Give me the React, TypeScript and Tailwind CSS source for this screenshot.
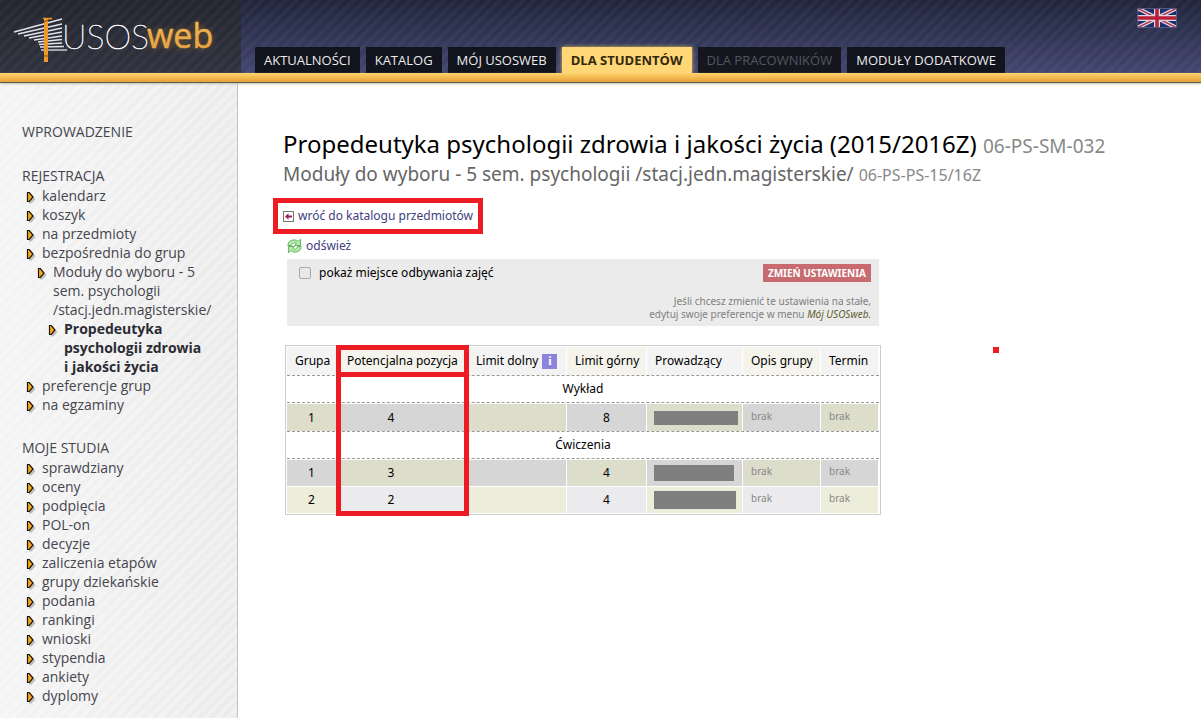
import { ReactNode } from "react"

interface NavTab {
  label: string
  state?: "active" | "disabled"
}

interface MenuItem {
  label: string
  level?: number
  current?: boolean
}

interface GroupRow {
  group: number
  position: number
  limit: number
  maskClass: string
}

const tabs: NavTab[] = [
  { label: "AKTUALNOŚCI" },
  { label: "KATALOG" },
  { label: "MÓJ USOSWEB" },
  { label: "DLA STUDENTÓW", state: "active" },
  { label: "DLA PRACOWNIKÓW", state: "disabled" },
  { label: "MODUŁY DODATKOWE" },
]

const registration: MenuItem[] = [
  { label: "kalendarz" },
  { label: "koszyk" },
  { label: "na przedmioty" },
  { label: "bezpośrednia do grup" },
  { label: "Moduły do wyboru - 5 sem. psychologii /stacj.jedn.magisterskie/", level: 1 },
  { label: "Propedeutyka psychologii zdrowia i\u00a0jakości życia", level: 2, current: true },
  { label: "preferencje grup" },
  { label: "na egzaminy" },
]

const studies: MenuItem[] = [
  { label: "sprawdziany" },
  { label: "oceny" },
  { label: "podpięcia" },
  { label: "POL-on" },
  { label: "decyzje" },
  { label: "zaliczenia etapów" },
  { label: "grupy dziekańskie" },
  { label: "podania" },
  { label: "rankingi" },
  { label: "wnioski" },
  { label: "stypendia" },
  { label: "ankiety" },
  { label: "dyplomy" },
]

const lectures: GroupRow[] = [{ group: 1, position: 4, limit: 8, maskClass: "w-[84px] h-[14px]" }]
const classes: GroupRow[] = [
  { group: 1, position: 3, limit: 4, maskClass: "w-[80px] h-[16px]" },
  { group: 2, position: 2, limit: 4, maskClass: "w-[82px] h-[18px]" },
]

const levelClass = ["pl-1", "pl-[15px]", "pl-[26px]"]

function Logo() {
  return (
    <svg width="240" height="72" viewBox="0 0 240 72" role="img" aria-label="USOSweb">
      <defs>
        <linearGradient id="web" x1="0" y1="0" x2="0" y2="1">
          <stop offset="0" stopColor="#f6c363" />
          <stop offset="1" stopColor="#e09a35" />
        </linearGradient>
        <filter id="glow" x="-20%" y="-20%" width="140%" height="140%">
          <feGaussianBlur stdDeviation="3" />
        </filter>
      </defs>
      <g stroke="#e4e4e8" strokeWidth="1.3" fill="none">
        <path d="M14 32 62 19" />
        <path d="M18 34 62 24" />
        <path d="M24 36 62 28" />
        <path d="M29 38 62 32" />
        <path d="M34 40 62 36" />
        <path d="M38 42 62 39.500" />
        <path d="M39 44.500 62 43" />
        <path d="M40 47 64 46.500" />
        <path d="M41 50 67 50" />
      </g>
      <rect x="44" y="18" width="4" height="44" fill="#ee9a2b" />
      <path d="M44 22 51 18.500M44 56h4" stroke="#8c4d10" strokeWidth="1" />
      <path d="M43 18.500h9" stroke="#ee9a2b" strokeWidth="1.500" />
      <text x="62" y="49" className="font-['Lato'] text-[34px] font-thin" fill="#ffffff" stroke="#ffffff" strokeWidth="0.600">
        USOS
      </text>
      <text x="147" y="48" className="font-['Open_Sans'] text-[34px]" fill="#d9952f" opacity="0.500" filter="url(#glow)" aria-hidden="true">
        web
      </text>
      <text x="147" y="48" className="font-['Open_Sans'] text-[34px]" fill="url(#web)" stroke="#eaa944" strokeWidth="0.500">
        web
      </text>
    </svg>
  )
}

function Flag() {
  return (
    <svg width="40" height="20" viewBox="0 0 40 20" aria-hidden="true">
      <rect width="40" height="20" fill="#1c2f6b" />
      <path d="M0 0 40 20M40 0 0 20" stroke="#d3d3de" strokeWidth="4" />
      <path d="M0 0 40 20M40 0 0 20" stroke="#b8283e" strokeWidth="1.300" />
      <path d="M20 0v20M0 10h40" stroke="#dcd8e2" strokeWidth="6" />
      <path d="M20 0v20M0 10h40" stroke="#b8203a" strokeWidth="3.500" />
      <rect x="0.500" y="0.500" width="39" height="19" fill="none" stroke="#55597f" />
    </svg>
  )
}

function Arrow() {
  return (
    <svg width="9" height="13" viewBox="0 0 9 13" className="mt-[5px] shrink-0 overflow-visible" aria-hidden="true">
      <path d="M2 2.500h2.500l4 4.500-4 4.500H2z" fill="#999" opacity="0.600" transform="translate(1 1)" />
      <path d="M1.500 1.500h1.800L7 6 3.300 10.500H1.500z" fill="#f5a81c" stroke="#1c1408" strokeWidth="1.200" />
    </svg>
  )
}

function BackIcon() {
  return (
    <svg width="11" height="11" viewBox="0 0 11 11" aria-hidden="true">
      <rect x="0.500" y="0.500" width="10" height="10" fill="#fff" stroke="#77776f" />
      <path d="M2 5.500 5.500 2.300v2.200H9v2H5.500v2.200z" fill="#a01c58" />
    </svg>
  )
}

function RefreshIcon() {
  return (
    <svg width="15" height="16" viewBox="0 0 16 16" aria-hidden="true">
      <g fill="#b5ebaa" stroke="#5cae55" strokeWidth="1" strokeLinejoin="round">
        <path d="M1 7.500C1 3.500 4 1.500 7.500 1.500c1.800 0 3.200.6 4.300 1.600L14.500.8v6.700H8l2-2c-2-1.600-4.500-.8-5.300 2z" />
        <path d="M15 8.500c0 4-3 6-6.500 6-1.800 0-3.200-.6-4.300-1.600L1.500 15.200V8.500H8l-2 2c2 1.600 4.500.8 5.300-2z" />
      </g>
    </svg>
  )
}

function Menu({ title, items }: { title: string; items: MenuItem[] }) {
  return (
    <section>
      <h2 className="leading-5">{title}</h2>
      <ul>
        {items.map((item) => (
          <li key={item.label} className={`flex gap-[7px] ${levelClass[item.level ?? 0]}`}>
            <Arrow />
            <a href="#" className={item.current ? "font-bold text-[#2c2c34]" : ""}>
              {item.label}
            </a>
          </li>
        ))}
      </ul>
    </section>
  )
}

function SectionRow({ children }: { children: ReactNode }) {
  return (
    <tr>
      <th colSpan={7} scope="colgroup" className="h-7 border-y border-dashed border-[#999] text-center font-normal">
        {children}
      </th>
    </tr>
  )
}

// odd and even cells get different tints, light rows use a paler pair
const tints = {
  olive: "[&>td:nth-child(odd)]:bg-[#dcddcb] [&>td:nth-child(even)]:bg-[#d6d6d7]",
  gray: "[&>td:nth-child(odd)]:bg-[#d6d6d7] [&>td:nth-child(even)]:bg-[#dcddcb]",
  light: "[&>td:nth-child(odd)]:bg-[#ecedda] [&>td:nth-child(even)]:bg-[#ebebed]",
}

function DataRow({ row, tint, height }: { row: GroupRow; tint: keyof typeof tints; height: string }) {
  const cell = "border-r border-t border-white"
  return (
    <tr className={`${height} ${tints[tint]}`}>
      <td className={`${cell} text-center`}>{row.group}</td>
      <td className={`${cell} pr-[22px] text-center`}>{row.position}</td>
      <td className={cell}></td>
      <td className={`${cell} text-center`}>{row.limit}</td>
      <td className={`${cell} pl-[7px]`}>
        <div className={`bg-[#7f7f7f] ${row.maskClass}`}></div>
      </td>
      <td className={`${cell} px-2 pb-[2px] text-[10px] text-[#888]`}>brak</td>
      <td className={`${cell} px-2 pb-[2px] text-[10px] text-[#888]`}>brak</td>
    </tr>
  )
}

export default function App() {
  return (
    <div className="flex min-h-screen flex-col bg-white font-['Noto_Sans',sans-serif] text-xs text-black">
      {/* Header */}
      <header className="flex h-[73px] bg-[repeating-linear-gradient(135deg,#ffffff08_0_4px,transparent_4px_8px),linear-gradient(#20253c,#43466f)] font-['Open_Sans',sans-serif]">
        <a href="#" className="w-[241px] shrink-0 bg-[repeating-linear-gradient(135deg,#ffffff08_0_4px,transparent_4px_8px),linear-gradient(#23252f,#30323f)]">
          <Logo />
        </a>
        <nav className="flex flex-1 items-end gap-[6px] pl-[14px] text-[13px]">
          {tabs.map((tab) => (
            <a
              key={tab.label}
              href="#"
              className={
                tab.state === "active"
                  ? "bg-[#ffd777] px-[9px] leading-[26px] font-bold text-[#33270b] shadow-[0_0_4px_#d8b960]"
                  : tab.state === "disabled"
                    ? "bg-[#15161e] px-[9px] leading-[26px] text-[#54565e]"
                    : "bg-[#11131d] px-[9px] leading-[26px] text-[#ececec]"
              }
            >
              {tab.label}
            </a>
          ))}
        </nav>
        <a href="#" aria-label="English" className="pt-2 pr-6">
          <Flag />
        </a>
      </header>
      <div className="relative h-[10px] border-b border-[#5f5b4c] bg-linear-to-b from-[#ffd56b] to-[#e6a035] shadow-[0_1px_2px_#b8c4b8]"></div>

      <div className="flex flex-1">
        {/* Sidebar */}
        <aside className="flex w-[238px] shrink-0 flex-col gap-6 border-r border-[#c4c4c4] bg-[repeating-linear-gradient(135deg,#ffffff48_0_4px,transparent_4px_8px),linear-gradient(to_right,#f4f4f4,#ebebeb)] pt-[39px] pr-5 pl-[22px] font-['Open_Sans',sans-serif] text-sm leading-[19px] text-[#45454d]">
          <h2 className="leading-5">WPROWADZENIE</h2>
          <Menu title="REJESTRACJA" items={registration} />
          <Menu title="MOJE STUDIA" items={studies} />
        </aside>

        {/* Content */}
        <main className="relative flex-1 pt-[47px] pl-[45px]">
          <h1 className="text-2xl leading-7">
            Propedeutyka psychologii zdrowia i jakości życia (2015/2016Z){" "}
            <span className="text-[19px] text-[#888]">06-PS-SM-032</span>
          </h1>
          <h2 className="text-[19px] leading-7 text-[#666]">
            Moduły do wyboru - 5 sem. psychologii /stacj.jedn.magisterskie/{" "}
            <span className="text-base text-[#888]">06-PS-PS-15/16Z</span>
          </h2>

          <div className="relative mt-[18px] flex w-fit">
            <a href="#" className="flex items-center gap-1 leading-5 text-[#404080]">
              <BackIcon />
              wróć do katalogu przedmiotów
            </a>
            <div className="absolute -inset-x-[10px] -inset-y-2 border-[5px] border-[#ed1c24]"></div>
          </div>
          <a href="#" className="mt-[10px] ml-1 flex w-fit items-center gap-1 leading-5 text-[#404080]">
            <RefreshIcon />
            odśwież
          </a>

          {/* Settings */}
          <form className="mt-[3px] ml-1 flex h-[67px] w-[592px] justify-between bg-[#ebebeb] py-[5px] pr-2 pl-3">
            <label className="flex h-[18px] items-center gap-2">
              <input type="checkbox" className="size-3 appearance-none rounded-xs border border-[#aaa] bg-[#e8e8e8]" />
              pokaż miejsce odbywania zajęć
            </label>
            <div className="flex flex-col items-end justify-between text-right text-[10px] leading-[13px] text-[#808080]">
              <button type="button" className="bg-[#c76b70] px-[5px] leading-[18px] font-bold text-white">
                ZMIEŃ USTAWIENIA
              </button>
              <p>
                Jeśli chcesz zmienić te ustawienia na stałe,
                <br />
                edytuj swoje preferencje w menu{" "}
                <a href="#" className="text-[#5f602e] italic">
                  Mój USOSweb.
                </a>
              </p>
            </div>
          </form>

          {/* Groups */}
          <div className="relative mt-[19px] ml-[2px] w-fit border border-[#ccc] p-px">
            <table className="w-[592px] table-fixed border-separate border-spacing-0">
              <colgroup>
                <col className="w-[50px]" />
                <col className="w-[131px]" />
                <col className="w-[99px]" />
                <col className="w-[80px]" />
                <col className="w-[96px]" />
                <col className="w-[78px]" />
                <col className="w-[58px]" />
              </colgroup>
              <thead>
                <tr className="h-7 text-left whitespace-nowrap [&>th]:border-r [&>th]:border-white [&>th]:pl-2 [&>th]:font-normal [&>th:nth-child(even)]:bg-[#f4f4ec] [&>th:nth-child(odd)]:bg-[#f3f3f4]">
                  <th scope="col">Grupa</th>
                  <th scope="col">
                    <span className="pl-[2px]">Potencjalna pozycja</span>
                  </th>
                  <th scope="col">
                    <span className="flex items-center gap-1">
                      Limit dolny
                      <span className="size-[15px] bg-[#8c84dc] text-center font-['Liberation_Serif',serif] leading-[15px] font-bold text-white">i</span>
                    </span>
                  </th>
                  <th scope="col">Limit górny</th>
                  <th scope="col">Prowadzący</th>
                  <th scope="col">Opis grupy</th>
                  <th scope="col">Termin</th>
                </tr>
              </thead>
              <tbody>
                <SectionRow>Wykład</SectionRow>
                <DataRow row={lectures[0]} tint="olive" height="h-7" />
                <SectionRow>Ćwiczenia</SectionRow>
                <DataRow row={classes[0]} tint="gray" height="h-[27px]" />
                <DataRow row={classes[1]} tint="light" height="h-[27px]" />
              </tbody>
            </table>

            {/* Marked column */}
            <div className="absolute -top-px left-[50px] h-8 w-[133px] border-[5px] border-[#ed1c24]"></div>
            <div className="absolute top-[26px] -bottom-[2px] left-[50px] w-[133px] border-[5px] border-[#ed1c24]"></div>
          </div>

          <div className="absolute top-[264px] left-[755px] size-[6px] bg-[#ed1c24]"></div>
        </main>
      </div>
    </div>
  )
}
